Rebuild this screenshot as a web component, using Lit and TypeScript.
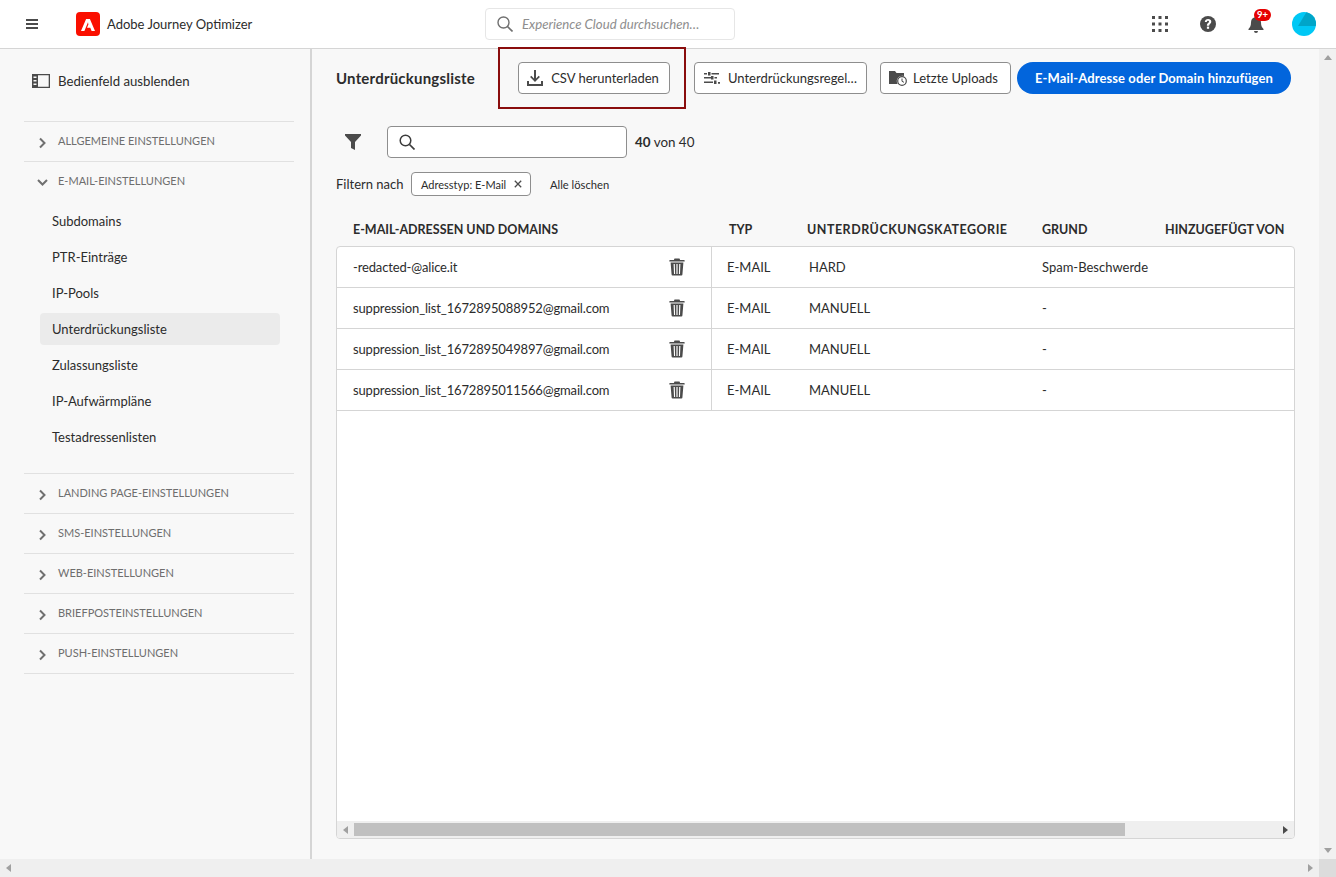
import {LitElement, css, html, svg} from 'lit';
import {customElement} from 'lit/decorators.js';

const chevronRight = svg`<path d="M3 1.5 L7.5 6 L3 10.5" fill="none" stroke="#707070" stroke-width="2"/>`;
const chevronDown = svg`<path d="M1 3 L5.5 7.5 L10 3" fill="none" stroke="#707070" stroke-width="2"/>`;

const trash = html`<svg class="trash" width="16" height="18" viewBox="0 0 16 18">
  <path fill="#4b4b4b" d="M5.5.5h5l.6 1.500H15a.7.7 0 0 1 .7.7v.8H.3v-.8A.7.7 0 0 1 1 2h3.900z"/>
  <path fill="#4b4b4b" fill-rule="evenodd" d="M1.600 4.500h12.800l-1 12a1 1 0 0 1-1 1H3.600a1 1 0 0 1-1-1zM4.600 6l.4 10h1.100L5.800 6zM7.400 6v10h1.200V6zM10.200 6l-.3 10H11l.4-10z"/>
</svg>`;

const rows = [
  {mail: '-redacted-@alice.it', cat: 'HARD', reason: 'Spam-Beschwerde'},
  {mail: 'suppression_list_1672895088952@gmail.com', cat: 'MANUELL', reason: '-'},
  {mail: 'suppression_list_1672895049897@gmail.com', cat: 'MANUELL', reason: '-'},
  {mail: 'suppression_list_1672895011566@gmail.com', cat: 'MANUELL', reason: '-'},
];

const mailItems = ['Subdomains', 'PTR-Einträge', 'IP-Pools', 'Unterdrückungsliste', 'Zulassungsliste', 'IP-Aufwärmpläne', 'Testadressenlisten'];
const lowerSections = ['Landing Page-Einstellungen', 'SMS-Einstellungen', 'Web-Einstellungen', 'Briefposteinstellungen', 'Push-Einstellungen'];

@customElement('app-root')
export class AppRoot extends LitElement {
  static styles = css`
    :host {
      display: block;
      height: 877px;
      overflow: hidden;
      font-family: Lato, 'Noto Sans', sans-serif;
      font-size: 13px;
      color: #2c2c2c;
      background: #f8f8f8;
    }
    .top {
      height: 48px;
      background: #fff;
      border-bottom: 1px solid #d5d5d5;
      display: flex;
      align-items: center;
      padding-left: 26px;
    }
    .logo {
      width: 24px;
      height: 24px;
      margin-left: 38px;
      background: #fa0f00;
      border-radius: 4px;
      display: flex;
      align-items: center;
      justify-content: center;
    }
    .logo svg {
      margin-top: 1px;
    }
    .product {
      margin-left: 7px;
      width: 378px;
    }
    .global-search {
      width: 250px;
      height: 32px;
      box-sizing: border-box;
      border: 1px solid #e6e6e6;
      border-radius: 4px;
      display: flex;
      align-items: center;
      padding-left: 11px;
      gap: 9px;
      font-style: italic;
      font-size: 13.2px;
      color: #8e8e8e;
    }
    .top-icons {
      margin-left: 417px;
      display: flex;
      align-items: center;
    }
    .help {
      margin-left: 32px;
    }
    .bell {
      position: relative;
      width: 16px;
      height: 18px;
      margin-left: 32px;
      margin-right: 28px;
    }
    .badge {
      position: absolute;
      left: 6px;
      top: -6px;
      width: 17px;
      height: 12px;
      border-radius: 6px;
      background: #e60000;
      color: #fff;
      font-size: 9.5px;
      font-weight: 700;
      line-height: 12px;
      text-align: center;
    }
    .body {
      display: flex;
      height: 810px;
    }
    .side {
      border-right: 2px solid #d5d5d5;
      padding: 0 16px 0 24px;
      width: 270px;
      flex: none;
    }
    .collapse {
      height: 64px;
      padding-bottom: 8px;
      display: flex;
      align-items: center;
      padding-left: 8px;
      gap: 8px;
      font-size: 13.2px;
    }
    .section {
      border-top: 1px solid #e1e1e1;
    }
    .section:last-child {
      border-bottom: 1px solid #e1e1e1;
    }
    .section-head {
      height: 39px;
      display: flex;
      align-items: center;
      padding-left: 13px;
      gap: 10px;
      font-size: 11px;
      text-transform: uppercase;
      color: #6e6e6e;
    }
    .section-head svg {
      flex: none;
      margin-top: 2px;
    }
    .section-head span {
      margin-bottom: 3px;
    }
    .items {
      padding: 2px 14px 18px 16px;
    }
    .item {
      height: 36px;
      display: flex;
      align-items: center;
      padding-left: 12px;
      position: relative;
    }
    .item.on::before {
      content: '';
      position: absolute;
      left: 0;
      right: 0;
      top: 2px;
      bottom: 2px;
      background: #ebebeb;
      border-radius: 4px;
    }
    .item span {
      position: relative;
    }
    .content {
      flex: none;
      width: 959px;
      padding-left: 24px;
      position: relative;
    }
    .bar {
      height: 32px;
      margin-top: 13px;
      display: flex;
      align-items: center;
    }
    .title {
      width: 182px;
      font-weight: 700;
      font-size: 15px;
      letter-spacing: 0.2px;
    }
    .btn {
      height: 32px;
      box-sizing: border-box;
      border: 1px solid #8e8e8e;
      border-radius: 4px;
      background: #fff;
      display: flex;
      align-items: center;
      justify-content: center;
      gap: 8px;
    }
    .btn-csv { width: 152px; padding-right: 2px; }
    .btn-rules { width: 173px; margin-left: 24px; }
    .btn-uploads { width: 131px; margin-left: 13px; padding-right: 4px; gap: 6px; }
    .btn-add {
      width: 274px;
      margin-left: 6px;
      height: 32px;
      border-radius: 16px;
      background: #0265dc;
      color: #fff;
      font-weight: 700;
      letter-spacing: 0.1px;
      display: flex;
      align-items: center;
      justify-content: center;
    }
    .mark {
      position: absolute;
      left: 186px;
      top: -2px;
      width: 188px;
      height: 62px;
      box-sizing: border-box;
      border: 2px solid #8a0d0d;
    }
    .search-row {
      height: 32px;
      margin-top: 32px;
      display: flex;
      align-items: center;
    }
    .funnel {
      margin-left: 9px;
      margin-right: 26px;
    }
    .search {
      width: 240px;
      height: 32px;
      box-sizing: border-box;
      border: 1px solid #8e8e8e;
      border-radius: 4px;
      background: #fff;
      display: flex;
      align-items: center;
      padding-left: 11px;
    }
    .count {
      margin-left: 8px;
      font-size: 13.4px;
    }
    .chips {
      height: 24px;
      margin-top: 14px;
      display: flex;
      align-items: center;
    }
    .chip {
      width: 120px;
      height: 24px;
      box-sizing: border-box;
      border: 1px solid #8e8e8e;
      border-radius: 4px;
      background: #fff;
      display: flex;
      align-items: center;
      padding-left: 9px;
      gap: 8px;
      font-size: 11px;
    }
    .chips-label {
      width: 75px;
    }
    .clear {
      margin-left: 19px;
      font-size: 11.2px;
    }
    .thead {
      height: 34px;
      margin-top: 16px;
      display: grid;
      grid-template-columns: 376px 78px 235px 123px auto;
      align-items: center;
      padding-left: 17px;
      font-size: 12.5px;
      font-weight: 700;
      white-space: nowrap;
    }
    .wide {
      letter-spacing: 0.5px;
    }
    .table {
      width: 959px;
      height: 593px;
      box-sizing: border-box;
      border: 1px solid #d5d5d5;
      border-radius: 4px;
      background: #fff;
      display: flex;
      flex-direction: column;
      overflow: hidden;
    }
    .rows {
      flex: 1;
    }
    .row {
      height: 41px;
      box-sizing: border-box;
      border-bottom: 1px solid #d5d5d5;
      display: grid;
      grid-template-columns: 375px 97px 233px auto;
      align-items: center;
      white-space: nowrap;
    }
    .mail {
      height: 100%;
      border-right: 1px solid #d5d5d5;
      box-sizing: border-box;
      padding: 0 26px 0 16px;
      display: flex;
      align-items: center;
      justify-content: space-between;
      letter-spacing: -0.15px;
    }
    .type {
      padding-left: 15px;
    }
    .hbar {
      height: 17px;
      background: #efefef;
      display: flex;
      align-items: center;
      flex: none;
    }
    .thumb {
      height: 13px;
      width: 771px;
      background: #c0c0c0;
    }
    .tri {
      flex: none;
      width: 17px;
      display: flex;
      justify-content: center;
    }
    .gap,
    .spacer {
      flex: 1;
    }
    .vbar {
      width: 17px;
      flex: none;
      background: #f1f1f1;
      display: flex;
      flex-direction: column;
      justify-content: space-between;
      align-items: center;
      padding: 6px 0;
      box-sizing: border-box;
    }
    .bottom {
      height: 18px;
      background: #efefef;
      display: flex;
      align-items: center;
      justify-content: space-between;
    }
    .corner {
      width: 17px;
      height: 18px;
      background: #dcdcdc;
    }
    .bottom-right {
      display: flex;
      align-items: center;
    }
  `;

  private section(label: string) {
    return html`<div class="section">
      <div class="section-head"><svg width="11" height="12" viewBox="0 0 11 12">${chevronRight}</svg><span>${label}</span></div>
    </div>`;
  }

  render() {
    return html`
      <div class="top">
        <svg width="12" height="10" viewBox="0 0 12 10"><path fill="#4b4b4b" d="M0 0h12v2H0zM0 4h12v2H0zM0 8h12v2H0z"/></svg>
        <div class="logo">
          <svg width="14" height="12" viewBox="0 0 14 12"><path fill="#fff" d="M5.100 0H8.900L14 12H10.600L9.300 8.800H6L7.400 5.500 7 3.300 3.400 12H0z"/></svg>
        </div>
        <div class="product">Adobe Journey Optimizer</div>
        <div class="global-search">
          <svg width="16" height="16" viewBox="0 0 16 16"><circle cx="6.500" cy="6.500" r="5.500" fill="none" stroke="#707070" stroke-width="1.400"/><path d="M10.500 10.500L15.500 15.500" stroke="#707070" stroke-width="1.600"/></svg>
          Experience Cloud durchsuchen…
        </div>
        <div class="top-icons">
          <svg width="16" height="16" viewBox="0 0 16 16"><path fill="#4b4b4b" d="M0 0h3v3H0zM6.500 0h3v3h-3zM13 0h3v3h-3zM0 6.500h3v3H0zM6.500 6.500h3v3h-3zM13 6.500h3v3h-3zM0 13h3v3H0zM6.500 13h3v3h-3zM13 13h3v3h-3z"/></svg>
          <svg class="help" width="16" height="16" viewBox="0 0 16 16"><circle cx="8" cy="8" r="8" fill="#4b4b4b"/><path d="M4.800 6C4.900 4 6.300 3 8.100 3c1.900 0 3.200 1.100 3.200 2.700 0 2.200-2.200 2.100-2.200 4H6.900c0-2.700 2.100-2.700 2.100-3.900 0-.6-.4-1-1-1-.7 0-1.100.5-1.200 1.200z" fill="#fff"/><rect x="6.900" y="10.600" width="2.200" height="2.200" fill="#fff"/></svg>
          <div class="bell">
            <svg width="16" height="18" viewBox="0 0 16 18"><path fill="#4b4b4b" d="M8 .5a1.200 1.200 0 0 1 1.200 1.200v.5C11.700 2.800 13 4.800 13 7.500c0 3.500 1 5 2.500 6.500v1H.5v-1C2 12.500 3 11 3 7.500c0-2.700 1.300-4.700 3.800-5.300v-.5A1.200 1.200 0 0 1 8 .5zM6 16h4a2 2 0 0 1-4 0z"/></svg>
            <div class="badge">9+</div>
          </div>
          <svg width="24" height="24" viewBox="0 0 24 24"><defs><clipPath id="av"><circle cx="12" cy="12" r="12"/></clipPath></defs><circle cx="12" cy="12" r="12" fill="#00c8f5"/><path clip-path="url(#av)" d="M14.500 0H24V14H6z" fill="#00a5c8"/></svg>
        </div>
      </div>
      <div class="body">
        <div class="side">
          <div class="collapse">
            <svg width="18" height="14" viewBox="0 0 18 14"><path fill="#4b4b4b" fill-rule="evenodd" d="M0 0h18v14H0zM6 1.300v11.400h10.700V1.300zM1.500 2.500V4h3V2.500zM1.500 6v1.500h3V6zM1.500 9.500V11h3V9.500z"/></svg>
            Bedienfeld ausblenden
          </div>
          ${this.section('Allgemeine Einstellungen')}
          <div class="section">
            <div class="section-head"><svg width="11" height="12" viewBox="0 0 11 12">${chevronDown}</svg><span>E-Mail-Einstellungen</span></div>
            <div class="items">
              ${mailItems.map(i => html`<div class="item ${i === 'Unterdrückungsliste' ? 'on' : ''}"><span>${i}</span></div>`)}
            </div>
          </div>
          ${lowerSections.map(s => this.section(s))}
        </div>
        <div class="content">
          <div class="bar">
            <div class="title">Unterdrückungsliste</div>
            <div class="btn btn-csv">
              <svg width="16" height="16" viewBox="0 0 16 16"><path fill="#4b4b4b" d="M7 0h2v8.500l2.700-2.700 1.200 1.200L8 11.900 3.100 7l1.200-1.200L7 8.500zM0 11h2v3h12v-3h2v5H0z"/></svg>
              CSV herunterladen
            </div>
            <div class="btn btn-rules">
              <svg width="16" height="12" viewBox="0 0 16 12"><path fill="#4b4b4b" d="M0 1h3v1.600H0zM4 0h2.500v3.400H4zM7.500 1H15v1.600H7.500zM0 5h7v1.600H0zM7 4h2.500v3.400H7zM10.500 5H13v1.600h-2.500zM0 9.500h9v1.600H0zM10 8.500h2.500v3.400H10zM14 10h2v1.800h-2z"/></svg>
              Unterdrückungsregel…
            </div>
            <div class="btn btn-uploads">
              <svg width="18" height="16" viewBox="0 0 18 16"><path fill="#4b4b4b" d="M0 1h6l1.500 2H15v3a5.500 5.500 0 0 0-6.400 8H0z"/><circle cx="13" cy="11" r="4.300" fill="#fff" stroke="#4b4b4b" stroke-width="1.200"/><path d="M13 8.500V11.300L15 12.300" fill="none" stroke="#4b4b4b"/></svg>
              Letzte Uploads
            </div>
            <div class="btn-add">E-Mail-Adresse oder Domain hinzufügen</div>
          </div>
          <div class="mark"></div>
          <div class="search-row">
            <svg class="funnel" width="16" height="16" viewBox="0 0 16 16"><path fill="#4b4b4b" d="M0 0h16v1.500L10 8v8l-4-2V8L0 1.500z"/></svg>
            <div class="search">
              <svg width="16" height="16" viewBox="0 0 16 16"><circle cx="6.500" cy="6.500" r="5.300" fill="none" stroke="#3c3c3c" stroke-width="1.500"/><path d="M10.500 10.500L15.500 15.500" stroke="#3c3c3c" stroke-width="1.700"/></svg>
            </div>
            <div class="count"><b>40</b> von 40</div>
          </div>
          <div class="chips">
            <div class="chips-label">Filtern nach</div>
            <div class="chip">Adresstyp: E-Mail
              <svg width="8" height="8" viewBox="0 0 8 8"><path d="M.8.8l6.400 6.400M7.200.8L.8 7.200" stroke="#4b4b4b" stroke-width="1.300"/></svg>
            </div>
            <div class="clear">Alle löschen</div>
          </div>
          <div class="thead">
            <div>E-MAIL-ADRESSEN UND DOMAINS</div>
            <div>TYP</div>
            <div class="wide">UNTERDRÜCKUNGSKATEGORIE</div>
            <div>GRUND</div>
            <div>HINZUGEFÜGT VON</div>
          </div>
          <div class="table">
            <div class="rows">
              ${rows.map(r => html`<div class="row">
                <div class="mail"><span>${r.mail}</span>${trash}</div>
                <div class="type">E-MAIL</div>
                <div>${r.cat}</div>
                <div>${r.reason}</div>
              </div>`)}
            </div>
            <div class="hbar">
              <div class="tri"><svg width="5" height="8" viewBox="0 0 5 8"><path d="M5 0v8L0 4z" fill="#a0a0a0"/></svg></div>
              <div class="thumb"></div>
              <div class="gap"></div>
              <div class="tri"><svg width="5" height="8" viewBox="0 0 5 8"><path d="M0 0v8l5-4z" fill="#4b4b4b"/></svg></div>
            </div>
          </div>
        </div>
        <div class="spacer"></div>
        <div class="vbar">
          <svg width="8" height="5" viewBox="0 0 8 5"><path d="M4 0l4 5H0z" fill="#a0a0a0"/></svg>
          <svg width="8" height="5" viewBox="0 0 8 5"><path d="M0 0h8L4 5z" fill="#a0a0a0"/></svg>
        </div>
      </div>
      <div class="bottom">
        <div class="tri"><svg width="5" height="8" viewBox="0 0 5 8"><path d="M5 0v8L0 4z" fill="#a0a0a0"/></svg></div>
        <div class="bottom-right">
          <div class="tri"><svg width="5" height="8" viewBox="0 0 5 8"><path d="M0 0v8l5-4z" fill="#a0a0a0"/></svg></div>
          <div class="corner"></div>
        </div>
      </div>
    `;
  }
}
